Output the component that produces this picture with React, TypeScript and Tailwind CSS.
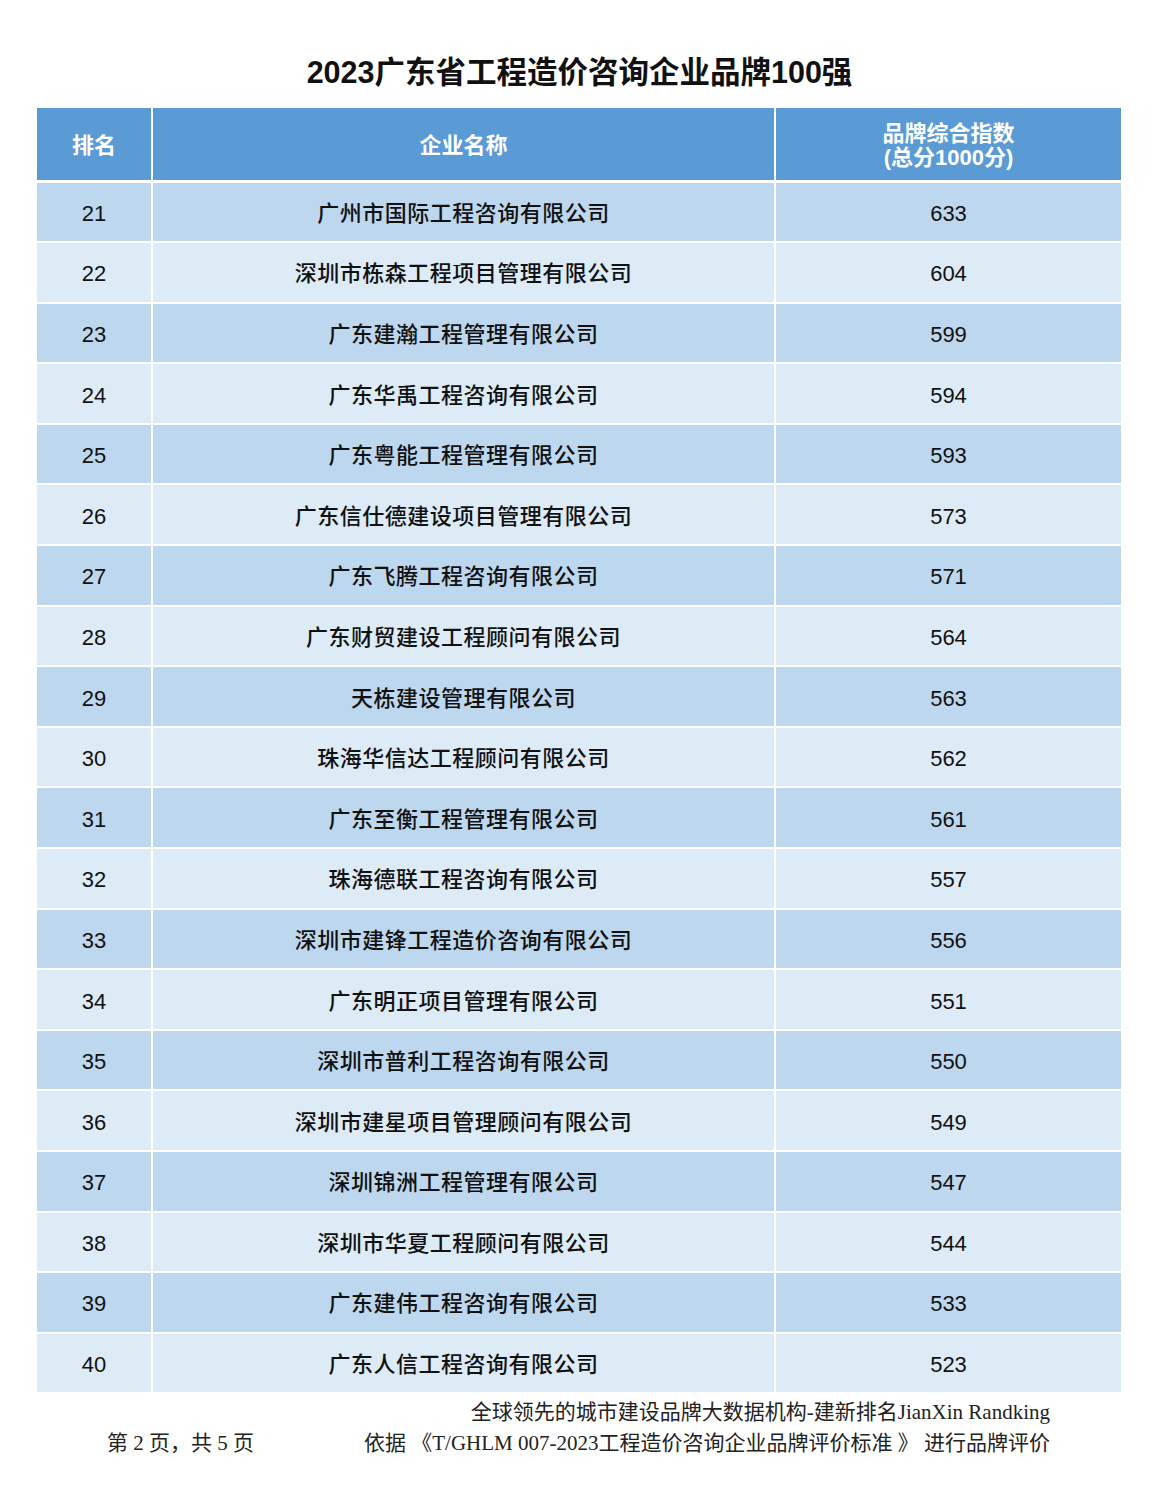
import React from "react";

const rows: [number, string, number][] = [
  [21, "广州市国际工程咨询有限公司", 633],
  [22, "深圳市栋森工程项目管理有限公司", 604],
  [23, "广东建瀚工程管理有限公司", 599],
  [24, "广东华禹工程咨询有限公司", 594],
  [25, "广东粤能工程管理有限公司", 593],
  [26, "广东信仕德建设项目管理有限公司", 573],
  [27, "广东飞腾工程咨询有限公司", 571],
  [28, "广东财贸建设工程顾问有限公司", 564],
  [29, "天栋建设管理有限公司", 563],
  [30, "珠海华信达工程顾问有限公司", 562],
  [31, "广东至衡工程管理有限公司", 561],
  [32, "珠海德联工程咨询有限公司", 557],
  [33, "深圳市建锋工程造价咨询有限公司", 556],
  [34, "广东明正项目管理有限公司", 551],
  [35, "深圳市普利工程咨询有限公司", 550],
  [36, "深圳市建星项目管理顾问有限公司", 549],
  [37, "深圳锦洲工程管理有限公司", 547],
  [38, "深圳市华夏工程顾问有限公司", 544],
  [39, "广东建伟工程咨询有限公司", 533],
  [40, "广东人信工程咨询有限公司", 523],
];

const sans = "font-['Liberation_Sans','Noto_Sans_CJK_SC',sans-serif]";
const serif = "font-['Liberation_Serif','Noto_Sans_CJK_SC',serif]";

export default function App() {
  return (
    <div className={`w-[1159px] h-[1500px] bg-white ${sans} text-[#111]`}>
      <div className="pt-[50px] h-[108px]">
        <h1 className="text-center text-[30.5px] leading-[44px] font-bold text-[#111]">
          2023广东省工程造价咨询企业品牌100强
        </h1>
      </div>
      <div className="mx-[37px] w-[1084px]">
        <div className="grid grid-cols-[114px_621px_345px] gap-x-[2px] h-[72px] bg-white">
          <div className="bg-[#5b9bd5] flex items-center justify-center pt-[2px] text-white font-bold text-[22px]">排名</div>
          <div className="bg-[#5b9bd5] flex items-center justify-center pt-[2px] text-white font-bold text-[22px]">企业名称</div>
          <div className="bg-[#5b9bd5] flex flex-col items-center justify-center pt-[3px] text-white font-bold text-[22px] leading-[24px]">
            <span>品牌综合指数</span>
            <span>(总分1000分)</span>
          </div>
        </div>
        <div className="flex flex-col gap-y-[2px] pt-[2.5px]">
          {rows.map(([rank, name, score], i) => (
            <div key={rank} className="grid grid-cols-[114px_621px_345px] gap-x-[2px] h-[58.6px]">
              <div className={`${i % 2 === 0 ? "bg-[#bdd7ee]" : "bg-[#ddebf7]"} flex items-center justify-center pt-[3px] text-[22px]`}>{rank}</div>
              <div className={`${i % 2 === 0 ? "bg-[#bdd7ee]" : "bg-[#ddebf7]"} flex items-center justify-center pt-[3px] text-[22px] tracking-[0.5px] font-medium`}>{name}</div>
              <div className={`${i % 2 === 0 ? "bg-[#bdd7ee]" : "bg-[#ddebf7]"} flex items-center justify-center pt-[3px] text-[22px]`}>{score}</div>
            </div>
          ))}
        </div>
      </div>
      <div className={`${serif} text-[21px] text-[#222] w-[1159px]`}>
        <div className="flex justify-end pr-[109px] pt-[5px] leading-[31px]">
          <span>全球领先的城市建设品牌大数据机构-建新排名JianXin Randking</span>
        </div>
        <div className="flex justify-between pl-[107px] pr-[109px] leading-[31px]">
          <span>第 2 页，共 5 页</span>
          <span>依据 《T/GHLM 007-2023工程造价咨询企业品牌评价标准 》 进行品牌评价</span>
        </div>
      </div>
    </div>
  );
}
